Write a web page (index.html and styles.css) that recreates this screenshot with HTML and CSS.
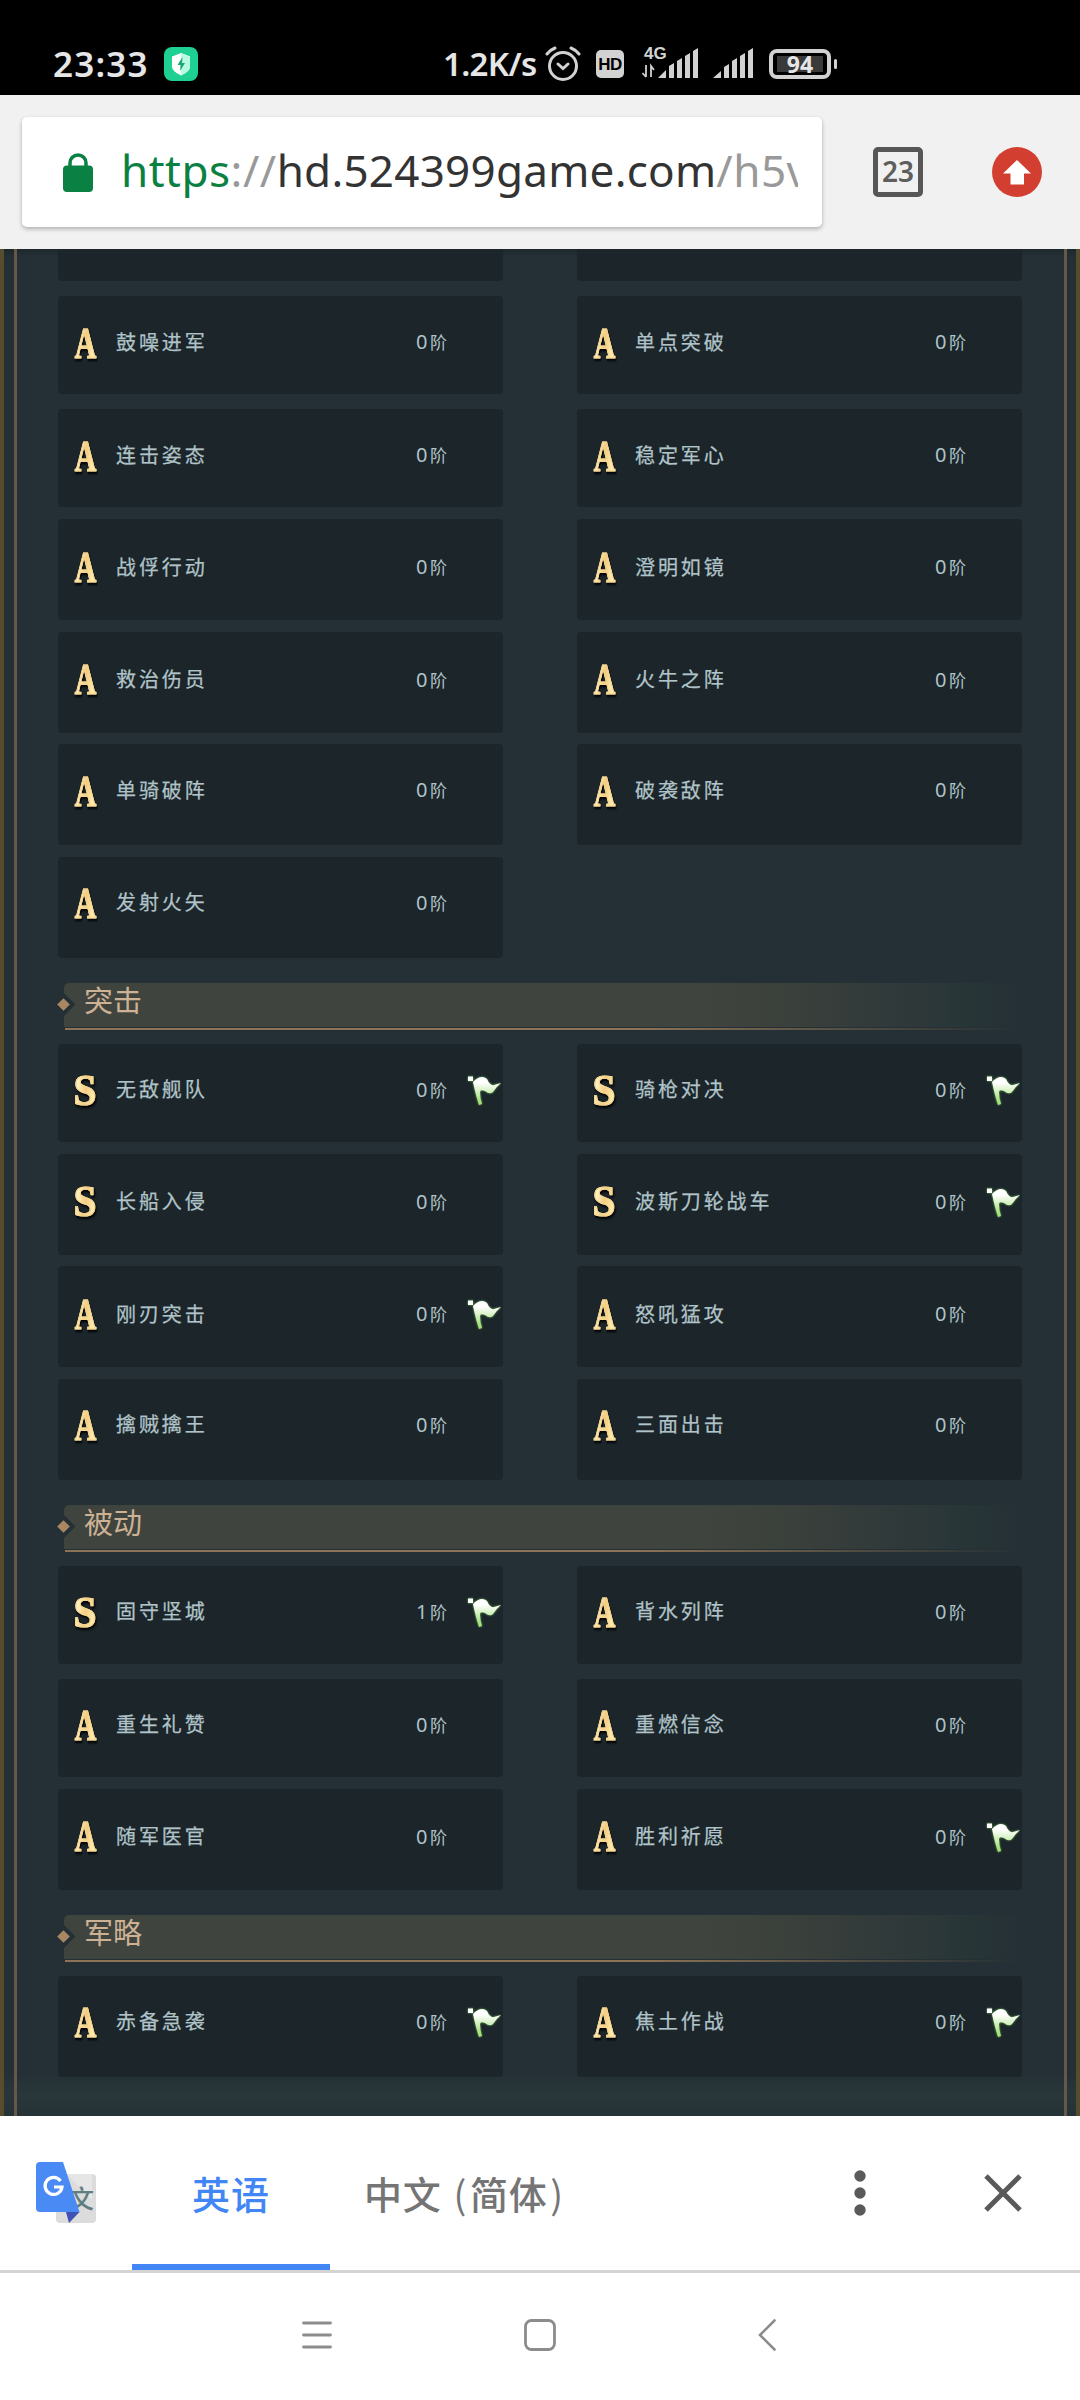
FILE: index.html
```
<!DOCTYPE html>
<html lang="zh-CN">
<head>
<meta charset="utf-8">
<title>战法</title>
<link rel="stylesheet" href="styles.css">
</head>
<body>
<svg width="0" height="0" class="defs" aria-hidden="true">
  <defs>
    <linearGradient id="flagfill" x1="0" y1="0" x2="0" y2="1"><stop offset="0.2" stop-color="#fff"/><stop offset="0.85" stop-color="#a5e07c"/></linearGradient>
    <symbol id="flag" viewBox="0 0 38 36">
      <path d="M3 4.500h5v4.500h-5z" fill="#fff"/>
      <path d="M8 10Q16 2 22 7Q25 14 29 13L36 11Q31 15 28 20Q25 23 20 19Q15 17 15 20Q15 26 17 32L14 33Q11 24 8 10z" fill="url(#flagfill)"/>
    </symbol>
  </defs>
</svg>
<header class="status">
  <span class="clock">23:33</span>
  <svg class="shield" viewBox="0 0 34 34"><rect width="34" height="34" rx="8" fill="#1ed193"/><path d="M17 6l9 3.500v10q0 5-9 9-9-4-9-9v-10z" fill="#fff"/><path d="M17 6l9 3.500v10q0 5-9 9z" fill="#b8fae2"/><path d="M18.500 10l-5 8h3l-.5 6 5-8h-3z" fill="#1aa878"/></svg>
  <span class="speed">1.2K/s</span>
  <svg class="alarm" viewBox="0 0 36 36" fill="none" stroke="#d2d2d2" stroke-width="3" stroke-linecap="round"><circle cx="18" cy="20" r="13.500"/><path d="M2 8q3-4 8-6M34 8q-3-4-8-6M13 18l5 4.500 5-4.500"/></svg>
  <span class="hd">HD</span>
  <div class="net">
    <span class="gen">4G</span>
    <svg class="bars" viewBox="0 0 58 32" fill="#d2d2d2"><path d="M6 18v12M2.500 26l3.500 4M11 30V19l3 4" fill="none" stroke="#d2d2d2" stroke-width="1.800"/><path d="M18 31l8-8v8zM29 19l5-3v15h-5zM37 14l5-3v20h-5zM45 9l5-3v25h-5zM53 4l5-3v30h-5z"/></svg>
  </div>
  <svg class="bars2" viewBox="0 0 40 30" fill="#d2d2d2"><path d="M0 29l8-7v7zM11 18l5-3v14h-5zM19 12l5-3v20h-5zM27 7l5-3v25h-5zM35 2l5-3v30h-5z"/></svg>
  <span class="battery"><i class="charge">94</i></span><i class="nub"></i>
</header>
<div class="toolbar">
  <div class="address">
    <svg class="lock" viewBox="0 0 30 39"><rect y="12.500" width="30" height="26.500" rx="4" fill="#0b8043"/><path d="M7 14V10a8 8 0 0 1 16 0v4" fill="none" stroke="#0b8043" stroke-width="3.500"/></svg>
    <div class="url"><span class="scheme">https</span><span class="dim">://</span><span class="host">hd.524399game.com</span><span class="dim">/h5v</span></div>
  </div>
  <div class="tabs">23</div>
  <svg class="update" viewBox="0 0 50 50"><circle cx="25" cy="25" r="25" fill="#d23f31"/><path d="M25 13L39 26.500H32V37.500H18.500V26.500H11z" fill="#fff"/></svg>
</div>
<main class="game">
  <div class="panel">
    <div class="row first"><div class="card"></div><div class="card"></div></div>
    <div class="row small"><div class="card"><b class="rank a">A</b><span class="name">鼓噪进军</span><span class="lv"><i>0</i>阶</span></div><div class="card"><b class="rank a">A</b><span class="name">单点突破</span><span class="lv"><i>0</i>阶</span></div></div>
    <div class="row small tight"><div class="card"><b class="rank a">A</b><span class="name">连击姿态</span><span class="lv"><i>0</i>阶</span></div><div class="card"><b class="rank a">A</b><span class="name">稳定军心</span><span class="lv"><i>0</i>阶</span></div></div>
    <div class="row low"><div class="card"><b class="rank a">A</b><span class="name">战俘行动</span><span class="lv"><i>0</i>阶</span></div><div class="card"><b class="rank a">A</b><span class="name">澄明如镜</span><span class="lv"><i>0</i>阶</span></div></div>
    <div class="row low"><div class="card"><b class="rank a">A</b><span class="name">救治伤员</span><span class="lv"><i>0</i>阶</span></div><div class="card"><b class="rank a">A</b><span class="name">火牛之阵</span><span class="lv"><i>0</i>阶</span></div></div>
    <div class="row"><div class="card"><b class="rank a">A</b><span class="name">单骑破阵</span><span class="lv"><i>0</i>阶</span></div><div class="card"><b class="rank a">A</b><span class="name">破袭敌阵</span><span class="lv"><i>0</i>阶</span></div></div>
    <div class="row last"><div class="card"><b class="rank a">A</b><span class="name">发射火矢</span><span class="lv"><i>0</i>阶</span></div></div>

    <h2 class="title"><i class="gem"></i>突击</h2>
    <div class="row small tight"><div class="card"><b class="rank s">S</b><span class="name">无敌舰队</span><span class="lv"><i>0</i>阶</span><svg class="flag"><use href="#flag"/></svg></div><div class="card"><b class="rank s">S</b><span class="name">骑枪对决</span><span class="lv"><i>0</i>阶</span><svg class="flag"><use href="#flag"/></svg></div></div>
    <div class="row low"><div class="card"><b class="rank s">S</b><span class="name">长船入侵</span><span class="lv"><i>0</i>阶</span></div><div class="card"><b class="rank s">S</b><span class="name">波斯刀轮战车</span><span class="lv"><i>0</i>阶</span><svg class="flag"><use href="#flag"/></svg></div></div>
    <div class="row low"><div class="card"><b class="rank a">A</b><span class="name">刚刃突击</span><span class="lv"><i>0</i>阶</span><svg class="flag"><use href="#flag"/></svg></div><div class="card"><b class="rank a">A</b><span class="name">怒吼猛攻</span><span class="lv"><i>0</i>阶</span></div></div>
    <div class="row last"><div class="card"><b class="rank a">A</b><span class="name">擒贼擒王</span><span class="lv"><i>0</i>阶</span></div><div class="card"><b class="rank a">A</b><span class="name">三面出击</span><span class="lv"><i>0</i>阶</span></div></div>

    <h2 class="title"><i class="gem"></i>被动</h2>
    <div class="row small"><div class="card"><b class="rank s">S</b><span class="name">固守坚城</span><span class="lv"><i>1</i>阶</span><svg class="flag"><use href="#flag"/></svg></div><div class="card"><b class="rank a">A</b><span class="name">背水列阵</span><span class="lv"><i>0</i>阶</span></div></div>
    <div class="row small tight"><div class="card"><b class="rank a">A</b><span class="name">重生礼赞</span><span class="lv"><i>0</i>阶</span></div><div class="card"><b class="rank a">A</b><span class="name">重燃信念</span><span class="lv"><i>0</i>阶</span></div></div>
    <div class="row low last"><div class="card"><b class="rank a">A</b><span class="name">随军医官</span><span class="lv"><i>0</i>阶</span></div><div class="card"><b class="rank a">A</b><span class="name">胜利祈愿</span><span class="lv"><i>0</i>阶</span><svg class="flag"><use href="#flag"/></svg></div></div>

    <h2 class="title"><i class="gem"></i>军略</h2>
    <div class="row"><div class="card"><b class="rank a">A</b><span class="name">赤备急袭</span><span class="lv"><i>0</i>阶</span><svg class="flag"><use href="#flag"/></svg></div><div class="card"><b class="rank a">A</b><span class="name">焦土作战</span><span class="lv"><i>0</i>阶</span><svg class="flag"><use href="#flag"/></svg></div></div>
  </div>
</main>
<section class="translate">
  <svg class="glogo" viewBox="0 0 60 61">
    <rect x="20" y="12" width="40" height="49" rx="4" fill="#dcdcdc"/><path d="M31 12L56 38V12z" fill="#e6e6e6"/>
    <text x="33" y="46" font-size="25" class="wen">文</text>
    <path d="M30 50H43.500L33 61z" fill="#3f51b5"/>
    <path d="M4 0H27L43.500 50H4Q0 50 0 46V4Q0 0 4 0z" fill="#4a8af4"/>
    <path d="M24.500 19A8.500 8.500 0 1 0 26 25H18" fill="none" stroke="#fff" stroke-width="3.200"/>
  </svg>
  <div class="lang on">英语</div>
  <div class="lang zh">中文<span class="paren open">(</span>简体<span class="paren">)</span></div>
  <svg class="dots" viewBox="0 0 12 46" fill="#5a5a5a"><circle cx="6" cy="6" r="5.700"/><circle cx="6" cy="23" r="5.700"/><circle cx="6" cy="40" r="5.700"/></svg>
  <svg class="close" viewBox="0 0 38 38" stroke="#5a5a5a" stroke-width="5"><path d="M2 2L36 36M36 2L2 36"/></svg>
</section>
<nav class="nav">
  <svg class="menu" viewBox="0 0 30 32" stroke="#8c8c8c" stroke-width="2.800" stroke-linecap="round"><path d="M1.500 4h27M1.500 16h27M1.500 28h27"/></svg>
  <svg class="home" viewBox="0 0 32 32" fill="none" stroke="#8c8c8c" stroke-width="2.800"><rect x="1.500" y="1.500" width="29" height="29" rx="6"/></svg>
  <svg class="back" viewBox="0 0 18 32" fill="none" stroke="#8c8c8c" stroke-width="2.600" stroke-linecap="round"><path d="M16.500 1.500L2 16L16.500 30.500"/></svg>
</nav>
</body>
</html>
```
FILE: styles.css
```
* { box-sizing: border-box; }
body { margin: 0; width: 1080px; height: 2400px; overflow: hidden; background: #fff; font-family: "Noto Sans", "Noto Sans CJK SC", sans-serif; }
svg { display: block; flex: none; }
i { font-style: normal; }
.defs { position: absolute; }

.status { height: 95px; background: #000; color: #e6e6e6; display: flex; align-items: flex-start; padding: 47px 0 0 53px; font-weight: 600; }
.status > * { flex: none; }
.clock { width: 111px; font-size: 35px; line-height: 34px; letter-spacing: 1.200px; }
.shield { width: 34px; height: 34px; }
.speed { width: 94px; margin-left: 245px; font-size: 33px; line-height: 33px; letter-spacing: -.7px; }
.alarm { width: 36px; height: 36px; margin: -1px 0 0 8px; }
.hd { width: 28px; height: 28px; margin: 3px 0 0 15px; border-radius: 5px; background: #d2d2d2; color: #000; font: 700 17px/29px "Liberation Sans", sans-serif; text-align: center; letter-spacing: -.5px; }
.net { width: 58px; height: 32px; margin-left: 16px; position: relative; }
.gen { position: absolute; left: 4px; top: 0; font: 700 17px/14px "Liberation Sans", sans-serif; color: #d2d2d2; }
.bars { width: 58px; height: 32px; }
.bars2 { width: 40px; height: 30px; margin: 2px 0 0 15px; overflow: visible; }
.battery { width: 62px; height: 30px; margin: 2px 0 0 16px; border: 4px solid #d2d2d2; border-radius: 8px; padding: 3px 4px; }
.charge { display: block; height: 16px; background: #3a3a3a; color: #e6e6e6; text-align: center; font-weight: 700; font-size: 23px; line-height: 16px; }
.nub { width: 3px; height: 10px; margin: 12px 0 0 3px; background: #d2d2d2; border-radius: 2px; }

.toolbar { height: 154px; background: #f1f1f1; display: flex; align-items: flex-start; padding: 22px 38px 0 22px; }
.address { width: 800px; height: 110px; background: #fff; border-radius: 5px; box-shadow: 0 2px 4px rgba(0,0,0,.28); display: flex; align-items: center; padding: 0 24px 0 41px; }
.lock { width: 30px; height: 39px; margin-right: 28px; }
.url { flex: 1; overflow: hidden; white-space: nowrap; font-size: 44px; line-height: 76px; color: #333; margin-top: -4px; }
.scheme { color: #0b8043; letter-spacing: .5px; }
.dim { color: #999; letter-spacing: .5px; }
.host { letter-spacing: .25px; }
.tabs { width: 50px; height: 50px; margin: 30px 0 0 51px; border: 5.500px solid #575757; border-radius: 5px; font: 600 28px/38px "Noto Sans", sans-serif; color: #5e5e5e; text-align: center; }
.update { width: 50px; height: 50px; margin: 30px 0 0 69px; }

.game { height: 1867px; padding: 0 4px; background: #574c2d; }
.panel { height: 100%; overflow: hidden; padding: 0 53px 0 54px; background: linear-gradient(90deg, transparent 10px, #665747 10px, #665747 13px, transparent 13px, transparent 1060px, #665747 1060px, #665747 1063px, transparent 1063px), linear-gradient(180deg, #1d282c, #243035 8px, #243035 1825px, #29373b 1845px, #253236); }
.row { display: flex; gap: 74px; height: 101px; margin-bottom: 11.500px; }
.row.first { height: 32px; margin-bottom: 15px; }
.row.small { height: 98px; margin-bottom: 15px; }
.row.small.tight { margin-bottom: 12px; }
.row.last { margin-bottom: 25px; }
.card { width: 445px; height: 100%; border-radius: 4px; background: #1b252a; color: #b0c3c8; display: grid; grid-template-columns: 58px 300px 50px 37px; grid-template-rows: 91px; align-items: center; }
.first .card { border-radius: 0 0 4px 4px; }
.low .card { grid-template-rows: 95px; }
.rank { width: 22px; height: 44px; margin: 4px 0 0 17px; display: flex; justify-content: center; font: 700 44px/44px "Liberation Serif", serif; background: linear-gradient(100deg, #fff0c0 25%, #f3cc80 50%, #ffebad 80%); -webkit-background-clip: text; background-clip: text; color: transparent; -webkit-text-stroke: 1.200px #f5d58f; filter: drop-shadow(1px 2px 1px #000); }
.rank.a { width: 33px; margin-left: 11px; transform: scaleX(.68); }
.rank.s { width: 26px; margin-left: 14px; transform: scaleX(.94); }
.low .rank { margin-top: 2px; }
.name { font: 400 20px/30px "Noto Sans CJK SC", sans-serif; letter-spacing: 2.900px; white-space: nowrap; -webkit-text-stroke: .25px #b0c3c8; }
.lv { font: 400 17px/30px "Noto Sans CJK SC", sans-serif; padding-top: 1px; white-space: nowrap; }
.lv i { font: 400 20px/20px "Noto Sans", sans-serif; display: inline-block; width: 14px; }
.flag { width: 38px; height: 36px; margin: 1px 0 0 -1px; filter: drop-shadow(0 0 1px #69b750); }

.title { position: relative; margin: 0 0 14px 6px; height: 47px; color: #ccb195; font: 400 29px/33px "Noto Sans CJK SC", sans-serif; padding-left: 20px; border-radius: 5px 0 0 0; background: linear-gradient(90deg, #8c7355 60%, transparent) 1px 45px / 100% 2px no-repeat, linear-gradient(90deg, #40443e 66%, #3a403b 76%, #30393a 87%, #293637 93%, #243035) 0 0 / 100% 44px no-repeat; }
.gem { position: absolute; left: -9px; top: 13px; width: 17px; height: 17px; background: #243035; transform: rotate(45deg); }
.gem::before { content: ""; position: absolute; inset: 4px; background: #a88762; }

.translate { height: 157px; display: flex; align-items: flex-start; padding-left: 36px; border-bottom: 3px solid #d4d4d4; font-family: "Noto Sans CJK SC", sans-serif; }
.glogo { width: 60px; height: 61px; margin: 46px 36px 0 0; }
.wen { fill: #607d80; font-family: "Noto Sans CJK SC", sans-serif; font-weight: 500; }
.lang { font-size: 38px; line-height: 154px; height: 154px; color: #757575; font-weight: 500; white-space: nowrap; }
.lang.on { width: 198px; text-align: center; color: #4285f4; border-bottom: 6px solid #4285f4; letter-spacing: 1px; }
.lang.zh { width: 489px; padding-left: 34px; letter-spacing: .7px; }
.paren { font-weight: 400; margin-left: 3px; }
.paren.open { margin: 0 3px 0 12px; }
.dots { width: 12px; height: 46px; margin-top: 54px; margin-left: 35px; }
.close { width: 38px; height: 38px; margin: 58px 0 0 118px; }

.nav { height: 127px; display: flex; align-items: center; padding: 0 0 4px 302px; }
.menu { width: 30px; height: 32px; }
.home { width: 32px; height: 32px; margin-left: 192px; }
.back { width: 18px; height: 32px; margin-left: 202px; }
```
